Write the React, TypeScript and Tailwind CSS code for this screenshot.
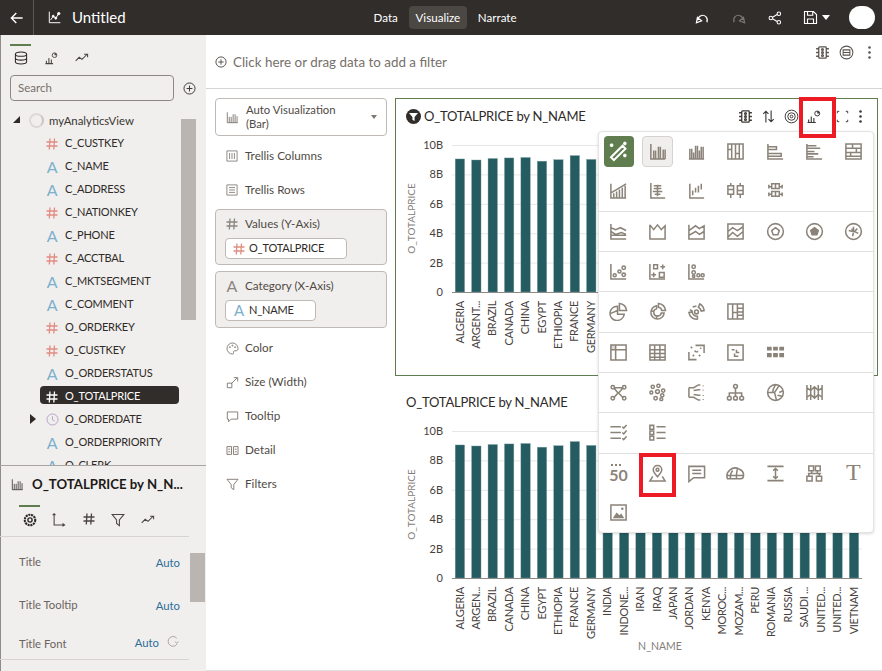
import React from 'react'

const FONT = "font-['Lato','Noto_Sans',sans-serif]"

function Ico({ size = 18, sw = 1.5, className = '', children }: { size?: number; sw?: number; className?: string; children: React.ReactNode }) {
  return (
    <svg width={size} height={size} viewBox="0 0 20 20" fill="none" stroke="currentColor" strokeWidth={sw} className={className}>
      {children}
    </svg>
  )
}

const P = ({ d }: { d: string }) => <path d={d} />

const MiniChart = () => (
  <g>
    <path d="M2 18h11M3.500 18v-4M7 18v-8M10.500 18v-6" />
    <circle cx="15" cy="6" r="3.300" strokeWidth={1.300} />
    <path d="M15 6V2.700A3.300 3.300 0 0 1 18.300 6z" fill="currentColor" stroke="none" />
  </g>
)

const sections: React.ReactNode[][][] = [
  [
    [
      'magic',
      <P d="M3 2v16h15M6 18V9M8 18V9M11 18V5M13 18V5M16 18V8M18 18V8" />,
      <P d="M2 18h16M3 18V7M5 18V7M7 18V11M9 18V4M11 18V4M13 18V9M15 18V5M17 18V5" />,
      <P d="M2 2h16v16H2zM6 2v16M10 2v16M14 2v16M2 8h4M10 12h4" />,
      <P d="M2 2v16h16M2 5h9v3H2M2 12h14v3H2" />,
      <P d="M2 2v16h16M2 4h10M2 6.500h14M2 10h8M2 12.500h12M2 15.500h7" />,
      <P d="M2 2h16v16H2zM2 6.500h16M2 11h16M2 15h16M9 2v4.500M13 6.500V11M7 11v4" />,
    ],
    [
      <P d="M2 3v15h16M5 18v-5M8 18v-7M11 18V9M14 18V7M17 18V5M3 12L18 3" />,
      <P d="M3 2v16h15M10 4v12M6 5h8M6 8h8M5 11h10M7 14h6" />,
      <P d="M3 3v15h15M6 10v5M9 7v5M12 5v7M15 3v6" />,
      <P d="M5 2v3M5 14v4M2 5h6v9H2zM2 9h6M15 2v3M15 14v4M12 5h6v9h-6zM12 10h6" />,
      <P d="M3 4v4M3 6h3M6 3h8v5H6zM10 3v5M14 6h3M17 4v4M3 12v4M3 14h3M6 11h8v5H6zM10 11v5M14 14h3M17 12v4" />,
    ],
  ],
  [
    [
      <P d="M2 2v16h16M2 6l5 2 5-2 6 3M2 10l5 3 6-2 5 2M2 14h16" />,
      <P d="M2 3v15h16V4l-4 4-4-5-4 5-4-5" />,
      <P d="M2 3v15h16V4l-5 3-4-3-7 5M2 14l7-4 4 3 5-3" />,
      <P d="M2 2h16v16H2zM2 10l5-4 5 3 6-4M2 16l5-5 5 4 6-5" />,
      <g><circle cx="10" cy="10" r="8.300" /><path d="M10 6l4 3-1.500 4.500h-5L6 9z" /></g>,
      <g><circle cx="10" cy="10" r="8.300" /><path d="M10 6l4 3-1.500 4.500h-5L6 9z" fill="currentColor" /></g>,
      <g><circle cx="10" cy="10" r="8.300" /><path d="M10 5v4M14 7l-3 3 4 2M10 11l-1 4M9 10l-4-1M8 7l2 3" /></g>,
    ],
  ],
  [
    [
      <g><P d="M2 2v16h16" /><circle cx="6" cy="14" r="1.600" /><circle cx="11" cy="10" r="1.600" /><circle cx="15.500" cy="6" r="1.800" /><circle cx="15.500" cy="13.500" r="1.800" /></g>,
      <P d="M2 2v16h16M6 3h4v4H6zM13 5h5M15.500 2.500v5M6 11v5M3.500 13.500h5M12 11h5v5h-5z" />,
      <g><P d="M2 2v16h16" /><circle cx="7" cy="5" r="1.800" /><circle cx="7" cy="11" r="1.800" /><circle cx="7" cy="15" r="1.200" /><circle cx="12" cy="14" r="1.600" /><circle cx="16.500" cy="14" r="1.600" /></g>,
    ],
  ],
  [
    [
      <P d="M11 1.500a8 8 0 0 1 7.500 7.500H11zM9 4.500a7.500 7.500 0 1 0 7 8.500H9zM2 12l7-3" />,
      <P d="M11 1.500a8 8 0 0 1 7.500 7.500h-4a4 4 0 0 0-3.500-3.500zM9 4a7 7 0 1 0 8 7.500h-3a4 4 0 1 1-5-4.500zM3 9l3 1M9 17v-3" />,
      <g><circle cx="10" cy="10.500" r="2" /><P d="M13.500 2a9 9 0 0 1 4.500 7l-3 .500a6 6 0 0 0-3-4zM6 5.500a6.500 6.500 0 0 1 4-1M2 11a8 8 0 0 0 9 7v-3a5 5 0 0 1-5.500-4.500zM3 8l3 2" /></g>,
      <P d="M2 2h16v16H2zM7 2v16M12 2v16M12 6.500h6M12 10.500h6M12 14h6M7 11h5" />,
    ],
  ],
  [
    [
      <g><P d="M2 2h16v16H2zM2 7h16M7 2v16" /><path d="M2 2h5v5H2z" fill="currentColor" stroke="none" opacity="0.3" /></g>,
      <P d="M2 2h16v16H2zM2 7h16M2 11h16M2 15h16M7 2v16M12.500 2v16" />,
      <P d="M9 2.500h9v8M10 17.500H2v-8M6 14l1.500-1.500M10 10l1.500-1.500M14 6l1-1M4 4l1.500 1.500M8 8l1.500 1.500M12.500 12.500l1.500 1.500" />,
      <P d="M2 2h16v16H2zM6 7h3M11 7v3h3M9 11v3h4" />,
      <g fill="currentColor" stroke="none"><path d="M1 4h5v4H1zM7.500 4h5v4h-5zM14 4h5v4h-5zM1 10.500h5v4.500H1zM7.500 10.500h5v4.500h-5zM14 10.500h5v4.500h-5z" /></g>,
    ],
  ],
  [
    [
      <g><P d="M5 5l10 0M5 5l4.500 5.500M15 5l-5 5.500M9.500 10.500L5 15.500M10 10.500l5 5" /><circle cx="4" cy="4.500" r="1.800" /><circle cx="16" cy="4.500" r="1.800" /><circle cx="4" cy="16" r="1.800" /><circle cx="16" cy="16" r="1.800" /></g>,
      <g><circle cx="5" cy="4" r="1.700" /><circle cx="11" cy="3" r="1.700" /><circle cx="3.500" cy="10" r="1.500" /><circle cx="10" cy="9" r="2" /><circle cx="16" cy="8" r="1.700" /><circle cx="8" cy="16" r="1.800" /><circle cx="15" cy="13" r="1.700" /><circle cx="14" cy="17" r="1.500" /></g>,
      <P d="M2 5v10M2 5h5l5-3h2M2 15h5l5 3h2M7 8l5-1h2M7 12l5 1h2M17 2.500v1M17 7v1M17 12.500v1M17 17v1" />,
      <g><circle cx="10" cy="3.500" r="2" /><circle cx="3.500" cy="16" r="2" /><circle cx="10" cy="16" r="2" /><circle cx="16.500" cy="16" r="2" /><P d="M10 5.500V14M3.500 14v-3.500h13V14" /></g>,
      <g><circle cx="10" cy="10" r="8.300" /><P d="M2 10h7l5-7.500M9 10l2 8M7 10c0-3 1-5 3-8M14 10l4-2M12 13l5 1" /></g>,
      <P d="M2 2v16M18 2v16M6 2v16M14 2v16M2 5l4 3 4-4 4 4 4-3M2 15l4-3 4 4 4-4 4 3M10 4v12" />,
    ],
  ],
  [
    [
      <P d="M1.500 4h11M1.500 10h11M1.500 16h11M14 4l1.500 1.500L18.500 2M14 10l1.500 1.500 3-3.500M14 16l1.500 1.500 3-3.500" />,
      <P d="M2 2.500h4v4H2zM2 8.500h4v3.500H2zM2 14h4v4H2zM9 4h9.500M9 10h9.500M9 16h9.500" />,
    ],
  ],
  [
    [
      'fifty',
      <g><P d="M10 13.500C7.500 10.500 5.500 8.500 5.500 6a4.500 4.500 0 0 1 9 0c0 2.500-2 4.500-4.500 7.500zM5 13l-3 5h16l-3-5" /><circle cx="10" cy="6" r="1.500" /></g>,
      <P d="M2 2.500h16.500v12H7L2 18.500zM5.500 6.500h9.500M5.500 10h9.500" />,
      <P d="M1.500 15.500A8.500 8.500 0 0 1 14 5.500c2.500 1 4.500 3 4.500 6 0 2-1 4-3 4zM1.500 12h17M7 7c-2 2-2.500 5-2.500 8.500M12 5.500c-1 3-1 7-1 10" />,
      <P d="M1.500 2.500h17M1.500 17.500h17M10 5v10M7.500 7L10 4.700 12.500 7M7.500 13l2.500 2.300 2.500-2.300" />,
      <P d="M4 2h5v5H4zM11 2h5v5h-5zM7 7v3M13 7v3M3 10h14M2 13h5.500v5H2zM12 13h5.500v5H12zM4 10v3M15 10v3" />,
      'T',
    ],
    [
      <g><P d="M2 2h16v16H2z" /><path d="M4 16l4-6 3 3 2-2 3 5z" fill="currentColor" stroke="none" /><circle cx="14" cy="6" r="1.300" fill="currentColor" stroke="none" /></g>,
    ],
  ],
]

function PopupCell({ item, selected }: { item: React.ReactNode; selected: boolean }) {
  if (item === 'magic') {
    return (
      <div className="flex h-[31px] w-[30px] items-center justify-center rounded-[4px] bg-[#5f7d4f] text-white">
        <Ico size={23} sw={1.800}>
          <path d="M3.500 15l10-10 2.500 2.500-10 10zM4 3v3M2.500 4.500h3M15.500 1.500v3M14 3h3M15.500 12v3M14 13.500h3" />
        </Ico>
      </div>
    )
  }
  if (item === 'fifty') {
    return (
      <div className="flex flex-col items-center leading-none text-[#8b8379]">
        <span className="h-[3px] w-[10px] -translate-x-[3px] border-t-2 border-dotted border-[#8b8379]" />
        <span className="text-[16px] font-bold leading-[15px]">50</span>
      </div>
    )
  }
  if (item === 'T') {
    return <span className="-translate-y-px font-['Liberation_Serif',serif] text-[24px] leading-none text-[#8b8379]">T</span>
  }
  return (
    <div className={`flex h-[31px] w-[31px] items-center justify-center rounded-[4px] text-[#8b8379] ${selected ? 'border border-[#d6d2cd] bg-[#f1efed]' : ''}`}>
      <Ico size={19} sw={1.600}>{item}</Ico>
    </div>
  )
}

function ChartPopup() {
  return (
    <div className="absolute left-[598px] top-[131px] w-[276px] rounded-[4px] border border-[#e6e4e2] bg-white shadow-[0_1px_3px_rgba(0,0,0,0.15)]">
      {sections.map((rows, s) => (
        <div key={s} className={s < sections.length - 1 ? 'border-b border-[#e1dfdd]' : ''}>
          {rows.map((row, r) => (
            <div key={r} className="grid h-[39.33px] grid-cols-7">
              {row.map((item, c) => (
                <div key={c} className="flex items-center justify-center">
                  <PopupCell item={item} selected={s === 0 && r === 0 && c === 1} />
                </div>
              ))}
            </div>
          ))}
        </div>
      ))}
    </div>
  )
}

const barValues = [9.05, 8.98, 9.08, 9.12, 9.15, 8.9, 9.0, 9.28, 9.02, 9.0, 9.1, 9.0, 9.05, 9.1, 9.0, 9.05, 9.1, 9.0, 9.1, 9.05, 9.0, 9.1, 9.05, 9.1, 9.0]
const secondLabels = ['ALGERIA', 'ARGEN...', 'BRAZIL', 'CANADA', 'CHINA', 'EGYPT', 'ETHIOPIA', 'FRANCE', 'GERMANY', 'INDIA', 'INDONE...', 'IRAN', 'IRAQ', 'JAPAN', 'JORDAN', 'KENYA', 'MOROC...', 'MOZAM...', 'PERU', 'ROMANIA', 'RUSSIA', 'SAUDI ...', 'UNITED...', 'UNITED...', 'VIETNAM']
const firstLabels = ['ALGERIA', 'ARGENT...', ...secondLabels.slice(2)]
const ticks = ['10B', '8B', '6B', '4B', '2B', '0']
const CHART_H = 147

function BarChart({ labels, top, height, showX }: { labels: string[]; top: number; height: number; showX?: boolean }) {
  const base = top + CHART_H
  return (
    <svg width={482} height={height} className="block">
      {ticks.map((t, i) => {
        const y = top + (i * CHART_H) / 5
        return (
          <g key={t}>
            {i < 5 ? <line x1={56} x2={466} y1={y + 0.5} y2={y + 0.5} stroke="#e9e7e5" /> : null}
            <text x={47} y={y + 4} textAnchor="end" fontSize={11} fill="#47423e">{t}</text>
          </g>
        )
      })}
      {barValues.map((v, i) => {
        const h = (v / 10) * CHART_H
        return <rect key={i} x={59.2 + i * 16.42} y={base - h} width={9.4} height={h} fill="#245c62" stroke="#7fa0a3" strokeWidth={0.4} />
      })}
      <line x1={56} x2={466} y1={base + 0.5} y2={base + 0.5} stroke="#8d8985" />
      {labels.map((l, i) => (
        <text key={i} transform={`translate(${67.5 + i * 16.42},${base + 9}) rotate(-90)`} textAnchor="end" fontSize={11} letterSpacing={-0.3} fill="#47423e">{l}</text>
      ))}
      <text transform={`translate(19,${top + 73.5}) rotate(-90)`} textAnchor="middle" fontSize={10} fill="#847d77">O_TOTALPRICE</text>
      {showX ? <text x={264} y={base + 72} textAnchor="middle" fontSize={10.5} fill="#847d77">N_NAME</text> : null}
    </svg>
  )
}

function HashIcon({ className = '' }: { className?: string }) {
  return (
    <svg width={12} height={12} viewBox="0 0 12 12" fill="none" stroke="currentColor" strokeWidth={1.300} className={className}>
      <path d="M4 0.500L3.300 11.500M8.500 0.500L7.800 11.500M0.500 4H11.500M0.500 8H11.500" />
    </svg>
  )
}

type TreeItem = { name: string; kind: 'num' | 'text' | 'date'; selected?: boolean }

const treeItems: TreeItem[] = [
  { name: 'C_CUSTKEY', kind: 'num' },
  { name: 'C_NAME', kind: 'text' },
  { name: 'C_ADDRESS', kind: 'text' },
  { name: 'C_NATIONKEY', kind: 'num' },
  { name: 'C_PHONE', kind: 'text' },
  { name: 'C_ACCTBAL', kind: 'num' },
  { name: 'C_MKTSEGMENT', kind: 'text' },
  { name: 'C_COMMENT', kind: 'text' },
  { name: 'O_ORDERKEY', kind: 'num' },
  { name: 'O_CUSTKEY', kind: 'num' },
  { name: 'O_ORDERSTATUS', kind: 'text' },
  { name: 'O_TOTALPRICE', kind: 'num', selected: true },
  { name: 'O_ORDERDATE', kind: 'date' },
  { name: 'O_ORDERPRIORITY', kind: 'text' },
  { name: 'O_CLERK', kind: 'text' },
]

function TreeRow({ item }: { item: TreeItem }) {
  return (
    <div className="relative flex h-[23px] items-center pl-[46px] pt-[2px] text-[11px] tracking-[-0.2px] text-[#2e2a27]">
      {item.selected ? <div className="absolute left-[40px] top-[2px] h-[18px] w-[139px] rounded-[4px] bg-[#312d2a]" /> : null}
      {item.kind === 'date' ? <div className="absolute left-[30px] top-[7px] h-0 w-0 border-y-[5px] border-l-[6px] border-y-transparent border-l-[#2e2a27]" /> : null}
      <div className="relative flex w-[19px] items-center">
        {item.kind === 'num' ? <HashIcon className={item.selected ? 'text-white' : 'text-[#e18d83]'} /> : null}
        {item.kind === 'text' ? <span className="w-[12px] text-center text-[16px] leading-none text-[#7cb0cd]">A</span> : null}
        {item.kind === 'date' ? (
          <Ico size={13} sw={1.500} className="text-[#b79fca]"><path d="M10 5v5.500l3.500 2" /><circle cx="10" cy="10" r="8.500" /></Ico>
        ) : null}
      </div>
      <span className={`relative ${item.selected ? 'text-white' : ''}`}>{item.name}</span>
    </div>
  )
}

function DataPanelTabs() {
  return (
    <div className="flex h-[31px] gap-[9.500px] pl-[10px]">
      <div className="flex w-[21px] justify-center border-t-2 border-[#5f7d4f] pt-[5px] text-[#2e2a27]">
        <Ico size={14} sw={1.500}>
          <ellipse cx="10" cy="4.500" rx="8" ry="3" />
          <path d="M2 4.500v11c0 1.700 3.500 3 8 3s8-1.300 8-3v-11M2 10c0 1.700 3.500 3 8 3s8-1.300 8-3" />
        </Ico>
      </div>
      <div className="flex w-[21px] justify-center pt-[7px] text-[#4a4541]">
        <Ico size={14} sw={1.500}><MiniChart /></Ico>
      </div>
      <div className="flex w-[21px] justify-center pt-[7px] text-[#4a4541]">
        <Ico size={14} sw={1.500}>
          <path d="M1 14l5-5 4 3 7-7M13 4.500h5v4.500" />
        </Ico>
      </div>
    </div>
  )
}

function DataPanel() {
  return (
    <div className="h-[430px] shrink-0">
      <div className="pt-[9px]">
        <DataPanelTabs />
        <div className="flex items-center pl-[10px]">
          <div className="flex h-[26px] w-[164px] items-center rounded-[4px] border border-[#8d8883] pl-[7px] text-[11.500px] text-[#76706a]">Search</div>
          <div className="ml-[9px] text-[#3d3935]">
            <Ico size={13} sw={1.500}><circle cx="10" cy="10" r="8.500" /><path d="M10 5.500v9M5.500 10h9" /></Ico>
          </div>
        </div>
      </div>
      <div className="relative mt-[7px] h-[357px] overflow-hidden">
        <div className="relative flex h-[23px] items-center pl-[49px] pt-[2px] text-[11.400px] text-[#3a3632]">
          <div className="absolute left-[13px] top-[8px] h-0 w-0 border-b-[7px] border-l-[7px] border-b-[#2e2a27] border-l-transparent" />
          <div className="absolute left-[29px] top-[5px] h-[15px] w-[15px] rounded-full border-2 border-[#dcd9d5] border-r-[#c9c5c0]" />
          myAnalyticsView
        </div>
        {treeItems.map((item) => (
          <TreeRow key={item.name} item={item} />
        ))}
        <div className="absolute left-[181px] top-[11px] h-[201px] w-[15px] bg-[#bab5b0]" />
      </div>
    </div>
  )
}

function PropRow({ label, value, refresh, h }: { label: string; value: string; refresh?: boolean; h: string }) {
  return (
    <div className={`flex items-start pl-[19px] pr-[9px] text-[11.300px] ${h}`}>
      <span className="text-[#6b645e]">{label}</span>
      <span className={`ml-auto text-[#2c6e99] ${refresh ? '-mt-px' : 'mt-px'}`}>{value}</span>
      {refresh ? (
        <span className="ml-[8px] -mt-px text-[#a39d97]">
          <Ico size={13} sw={1.400}><path d="M15.500 14A7.500 7.500 0 1 1 15 5M17.500 10l-2.500 3-2.500-3" /></Ico>
        </span>
      ) : null}
    </div>
  )
}

function PropertiesPanel() {
  return (
    <div className="flex-1 border-t border-[#a8a5a1]">
      <div className="flex h-[39px] items-center pb-[2px] pl-[11px]">
        <Ico size={13} sw={1.400} className="text-[#4a4541]"><path d="M2 2v16h16M5 18V9M8 18V9M11 18V5M14 18V5M17 18V8" /></Ico>
        <span className="ml-[8px] text-[13.200px] font-bold text-[#1c1917]">O_TOTALPRICE by N_N...</span>
      </div>
      <div className="flex">
        <div className="w-[189px]">
          <div className="flex h-[32px] items-start gap-[8.500px] border-b border-[#d6d3d0] pl-[19px]">
            <div className="flex h-[31px] w-[21px] justify-center border-t-2 border-[#5f7d4f] pt-[6px] text-[#2e2a27]">
              <Ico size={14} sw={2}><circle cx="10" cy="10" r="3" /><circle cx="10" cy="10" r="7.500" strokeDasharray="3 1" strokeWidth={3} /></Ico>
            </div>
            <div className="flex h-[31px] w-[21px] justify-center pt-[8px] text-[#4a4541]">
              <Ico size={14} sw={1.500}><path d="M3 1v16h14M1 3l2-2 2 2M15 15l3 2-3 2" /></Ico>
            </div>
            <div className="flex h-[31px] w-[21px] justify-center pt-[8px] text-[#4a4541]"><HashIcon /></div>
            <div className="flex h-[31px] w-[21px] justify-center pt-[8px] text-[#4a4541]">
              <Ico size={14} sw={1.500}><path d="M1.500 2h17l-6.500 8v8l-4-3v-5z" /></Ico>
            </div>
            <div className="flex h-[31px] w-[21px] justify-center pt-[8px] text-[#4a4541]">
              <Ico size={14} sw={1.500}><path d="M1 14l5-5 4 3 7-7M13 4.500h5v4.500" /></Ico>
            </div>
          </div>
          <div className="border-b border-[#d6d3d0] pb-[7px] pt-[17px]">
            <PropRow label="Title" value="Auto" h="h-[43px]" />
            <PropRow label="Title Tooltip" value="Auto" h="h-[39px]" />
            <PropRow label="Title Font" value="Auto" refresh h="h-[16px]" />
          </div>
        </div>
        <div className="ml-px w-[15px]">
          <div className="mt-[48px] h-[49px] bg-[#bab5b0]" />
        </div>
      </div>
    </div>
  )
}

function ShelfRow({ icon, label }: { icon: React.ReactNode; label: string }) {
  return (
    <div className="flex h-[34px] items-center pl-[11px] text-[11.700px] text-[#4f4a45]">
      <div className="flex w-[19px] items-center text-[#7d7670]">{icon}</div>
      {label}
    </div>
  )
}

function ShelfBox({ icon, label, pill, pillIcon, pillW, h }: { icon: React.ReactNode; label: string; pill: string; pillIcon: React.ReactNode; pillW: string; h: string }) {
  return (
    <div className={`rounded-[4px] border border-[#bfbab5] bg-[#f1efed] pl-[9px] ${h}`}>
      <div className="flex h-[28px] items-center pl-px text-[11.700px] text-[#4f4a45]">
        <div className="flex w-[19px] items-center text-[#8d8680]">{icon}</div>
        {label}
      </div>
      <div className={`flex h-[21px] items-center rounded-[4px] border border-[#bfbab5] bg-white pl-[7px] text-[11px] tracking-[-0.2px] text-[#2e2a27] ${pillW}`}>
        <div className="flex w-[16px] items-center">{pillIcon}</div>
        {pill}
      </div>
    </div>
  )
}

function GrammarColumn() {
  return (
    <div className="w-[189px] shrink-0 pl-[9px] pt-[9px]">
      <div className="w-[172px]">
        <div className="flex h-[38px] items-center rounded-[4px] border border-[#bfbab5] bg-white pl-[10px] pr-[9px]">
          <Ico size={13} sw={1.400} className="shrink-0 text-[#7d7670]"><path d="M2 2v16h16M5 18V9M8 18V9M11 18V5M14 18V5M17 18V8" /></Ico>
          <div className="ml-[7px] flex-1 text-[11.300px] leading-[14px] text-[#4f4a45]">
            Auto Visualization
            <br />
            (Bar)
          </div>
          <div className="h-0 w-0 border-x-[3.500px] border-t-[4px] border-x-transparent border-t-[#7d7670]" />
        </div>
        <div className="mt-[3px]">
          <ShelfRow label="Trellis Columns" icon={<Ico size={12} sw={1.400}><path d="M1.500 1.500h17v17h-17zM6 5v10M10 5v10M14 5v10" /></Ico>} />
          <ShelfRow label="Trellis Rows" icon={<Ico size={12} sw={1.400}><path d="M1.500 1.500h17v17h-17zM5 6h10M5 10h10M5 14h10" /></Ico>} />
        </div>
        <div className="mt-[2px] flex flex-col gap-[6px]">
          <ShelfBox
            h="h-[56px]"
            label="Values (Y-Axis)"
            icon={<HashIcon />}
            pill="O_TOTALPRICE"
            pillW="w-[122px]"
            pillIcon={<HashIcon className="text-[#e18d83]" />}
          />
          <ShelfBox
            h="h-[57px]"
            label="Category (X-Axis)"
            icon={<span className="w-[12px] text-center text-[16px] leading-none">A</span>}
            pill="N_NAME"
            pillW="w-[91px]"
            pillIcon={<span className="w-[12px] text-center text-[15px] leading-none text-[#7cb0cd]">A</span>}
          />
        </div>
        <div className="mt-[3px]">
          <ShelfRow label="Color" icon={<Ico size={13} sw={1.400}><path d="M10 1.500a8.500 8.500 0 0 0 0 17c2 0 2-1.500 1.500-2.500-.5-1.500.5-2.500 2-2.500h2c2 0 3-1.500 3-3.500 0-4.500-4-8.500-8.500-8.500z" /><circle cx="6" cy="8" r="0.800" /><circle cx="10" cy="5.500" r="0.800" /><circle cx="14" cy="8" r="0.800" /></Ico>} />
          <ShelfRow label="Size (Width)" icon={<Ico size={13} sw={1.400}><path d="M2 11h7v7H2zM8 12l9-9M12 2.500h6v6" /></Ico>} />
          <ShelfRow label="Tooltip" icon={<Ico size={13} sw={1.400}><path d="M2 3h16v11H8l-4 4v-4H2z" /></Ico>} />
          <ShelfRow label="Detail" icon={<Ico size={13} sw={1.400}><path d="M1.500 4h7v12h-7zM11.500 4h7v12h-7zM3.500 8h3M3.500 12h3M13.500 8h3M13.500 12h3" /></Ico>} />
          <ShelfRow label="Filters" icon={<Ico size={13} sw={1.400}><path d="M1.500 2h17l-6.500 8v8l-4-3v-5z" /></Ico>} />
        </div>
      </div>
    </div>
  )
}

function TrafficIcon({ size, className }: { size: number; className: string }) {
  return (
    <Ico size={size} sw={1.700} className={className}>
      <path d="M6 2.500h8a1 1 0 0 1 1 1v13a1 1 0 0 1-1 1H6a1 1 0 0 1-1-1v-13a1 1 0 0 1 1-1zM1.500 5H5M15 5h3.500M1.500 10H5M15 10h3.500M1.500 15H5M15 15h3.500" />
      <circle cx="10" cy="6" r="1.200" />
      <circle cx="10" cy="10" r="1.200" />
      <circle cx="10" cy="14" r="1.200" />
    </Ico>
  )
}

function ChartCards() {
  return (
    <div className="w-[483px] pt-[9px]">
      <div className="h-[278px] overflow-hidden border border-[#5f7d4f]">
        <div className="flex h-[35px] items-center pl-[10px]">
          <div className="flex h-[15px] w-[15px] items-center justify-center rounded-full bg-[#312d2a] text-white">
            <svg width={9} height={9} viewBox="0 0 10 10" fill="currentColor"><path d="M0 1h10L6.200 5.500V10L3.800 8.500v-3z" /></svg>
          </div>
          <span className="ml-[3px] text-[13px] tracking-[-0.2px] text-[#2e2a27]">O_TOTALPRICE by N_NAME</span>
          <div className="ml-auto flex items-center text-[#3d3935]">
            <TrafficIcon size={15} className="mr-[8px]" />
            <Ico size={15} sw={1.500} className="mr-[8px]"><path d="M6.500 18V3M3 6.500L6.500 3 10 6.500M13.500 2v15M10 13.500l3.500 3.500 3.500-3.500" /></Ico>
            <Ico size={15} sw={1.300} className="mr-[7px]"><circle cx="10" cy="10" r="8.500" /><circle cx="10" cy="10" r="5" /><circle cx="10" cy="10" r="1.800" /></Ico>
            <Ico size={15} sw={1.500} className="mr-[15px]"><MiniChart /></Ico>
            <Ico size={13} sw={1.500} className="mr-[10px]"><path d="M5 2H2v3M15 2h3v3M5 18H2v-3M15 18h3v-3" /></Ico>
            <svg width={3} height={13} viewBox="0 0 3 13" fill="currentColor" className="mr-[15px]"><circle cx="1.500" cy="1.500" r="1.300" /><circle cx="1.500" cy="6.500" r="1.300" /><circle cx="1.500" cy="11.500" r="1.300" /></svg>
          </div>
        </div>
        <BarChart labels={firstLabels} top={11} height={240} />
      </div>
      <div className="mt-[18px] pl-[11px] text-[13px] leading-[17px] tracking-[-0.2px] text-[#2e2a27]">O_TOTALPRICE by N_NAME</div>
      <div className="mt-[9px] ml-px">
        <BarChart labels={secondLabels} top={11} height={242} showX />
      </div>
    </div>
  )
}

function TopBar() {
  return (
    <div className="flex h-[35px] items-center bg-[#312d2a] text-white">
      <div className="flex h-full w-[34px] items-center justify-center border-r border-[#5c5854]">
        <Ico size={14} sw={2}><path d="M18 10H2M9 3l-7 7 7 7" /></Ico>
      </div>
      <div className="ml-[14px]">
        <Ico size={13} sw={1.500}><path d="M2 1v17h17M4 14l4-6 4 3 5-8" /><circle cx="8" cy="8" r="1.500" fill="currentColor" /><circle cx="12" cy="11" r="1.500" fill="currentColor" /><circle cx="16.500" cy="4" r="1.800" fill="currentColor" /></Ico>
      </div>
      <span className="ml-[11px] text-[15px]">Untitled</span>
      <div className="ml-[248px] flex items-center text-[11.600px]">
        <span>Data</span>
        <span className="ml-[11px] flex h-[23px] w-[58px] items-center justify-center rounded-[4px] bg-[#4b4743]">Visualize</span>
        <span className="ml-[11px]">Narrate</span>
      </div>
      <div className="ml-auto flex items-center">
        <Ico size={14} sw={1.700} className="mr-[23px]"><path d="M2 17l1.500-8 6 5zM4.500 13a6.500 6.500 0 0 1 11-5c2 2 2.500 5 1.500 8" /></Ico>
        <Ico size={14} sw={1.700} className="mr-[22px] text-[#7c7773]"><path d="M18 17l-1.500-8-6 5zM15.500 13a6.500 6.500 0 0 0-11-5c-2 2-2.500 5-1.500 8" /></Ico>
        <Ico size={14} sw={1.500} className="mr-[21px]"><circle cx="4" cy="10" r="2.500" /><circle cx="15.500" cy="4" r="2.500" /><circle cx="15.500" cy="16" r="2.500" /><path d="M6.500 9l6.500-4M6.500 11l6.500 4" /></Ico>
        <Ico size={15} sw={1.500}><path d="M2 2h12l4 4v12H2zM6 2v5h7V2M6 18v-6h8v6" /></Ico>
        <div className="ml-[4px] h-0 w-0 border-x-[4.500px] border-t-[5px] border-x-transparent border-t-white" />
        <div className="ml-[19px] mr-[7px] h-[23px] w-[26px] rounded-full bg-white" />
      </div>
    </div>
  )
}

export default function App() {
  return (
    <div className={`relative flex h-[671px] w-[882px] flex-col overflow-hidden bg-white ${FONT}`}>
      <TopBar />
      <div className="flex min-h-0 flex-1">
        <div className="flex w-[206px] shrink-0 flex-col overflow-hidden bg-[#f1efed] shadow-[inset_1px_0_0_#8f8b87]">
          <DataPanel />
          <PropertiesPanel />
        </div>
        <div className="flex min-w-0 flex-1 flex-col">
          <div className="flex h-[54px] shrink-0 border-b border-[#d6d3d0]">
            <div className="mt-[17px] flex items-center self-start pl-[9px] text-[#76706a]">
              <Ico size={12} sw={1.500} className="text-[#4a4541]"><circle cx="10" cy="10" r="8.500" /><path d="M10 5.500v9M5.500 10h9" /></Ico>
              <span className="ml-[6px] text-[13.400px] leading-[20px]">Click here or drag data to add a filter</span>
            </div>
            <div className="ml-auto mr-[11px] mt-[9px] flex h-[16px] items-center text-[#5a5550]">
              <TrafficIcon size={15} className="mr-[9px]" />
              <Ico size={15} sw={1.400} className="mr-[14px]"><circle cx="10" cy="10" r="8.500" /><path d="M5.500 6.500h9v7h-9zM5.500 10h9" /></Ico>
              <svg width={3} height={13} viewBox="0 0 3 13" fill="currentColor"><circle cx="1.500" cy="1.500" r="1.300" /><circle cx="1.500" cy="6.500" r="1.300" /><circle cx="1.500" cy="11.500" r="1.300" /></svg>
            </div>
          </div>
          <div className="flex min-h-0 flex-1 border-b border-[#e1dfdd]">
            <GrammarColumn />
            <ChartCards />
          </div>
        </div>
      </div>
      <ChartPopup />
      <div className="absolute left-[799px] top-[97px] h-[41px] w-[37px] border-4 border-[#ed1c24]" />
      <div className="absolute left-[639px] top-[453px] h-[44px] w-[37px] border-4 border-[#ed1c24]" />
    </div>
  )
}
